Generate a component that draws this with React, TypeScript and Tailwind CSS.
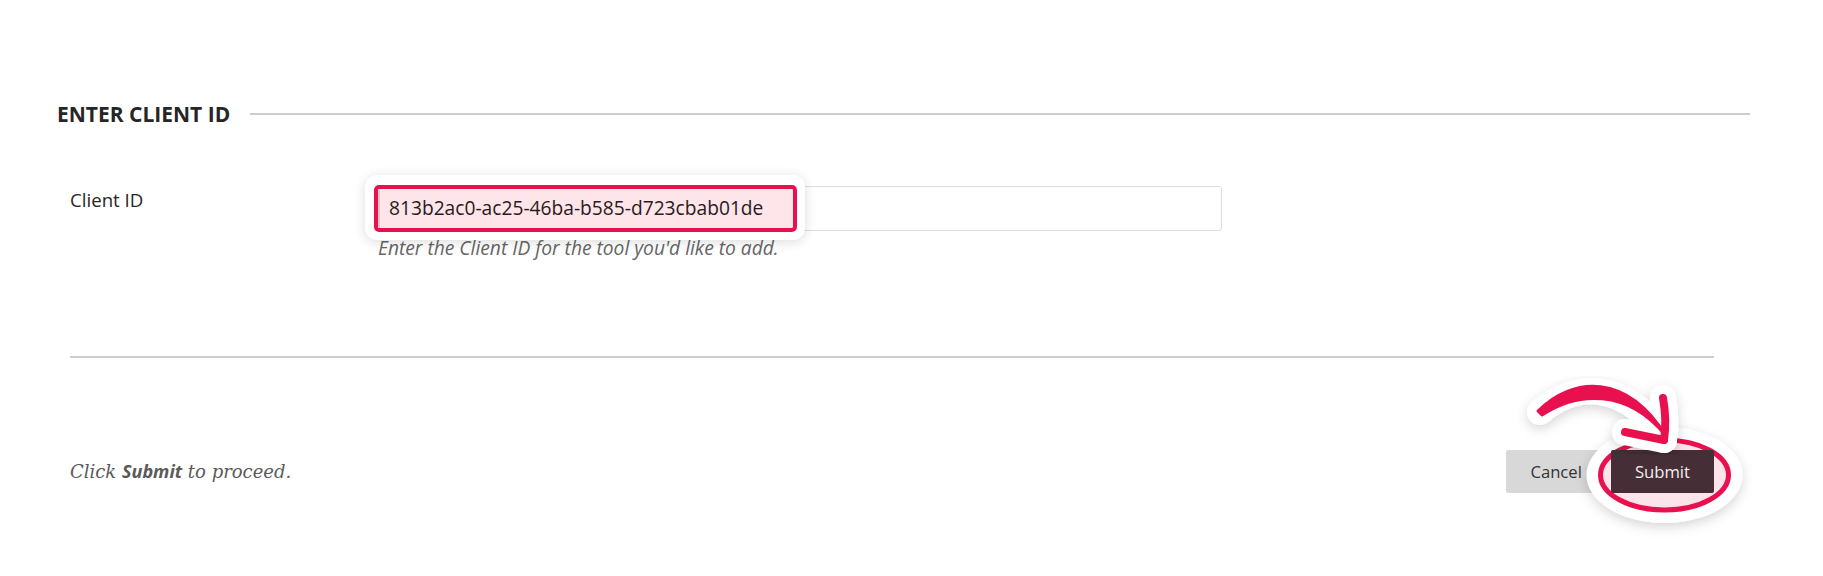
import React from 'react'

const clientId = '813b2ac0-ac25-46ba-b585-d723cbab01de'

function SubmitCallout() {
  // ellipse halo drawn under the Submit button
  return (
    <svg
      className="pointer-events-none absolute left-0 top-0 z-[5]"
      width={1823}
      height={576}
      aria-hidden="true"
    >
      <defs>
        <filter id="halo-shadow" x="-20%" y="-20%" width="140%" height="150%">
          <feDropShadow dx="0" dy="4" stdDeviation="6" floodColor="#000" floodOpacity="0.16" />
        </filter>
      </defs>
      <ellipse cx={1664.5} cy={475} rx={78} ry={48} fill="#fff" filter="url(#halo-shadow)" />
      <ellipse cx={1664.5} cy={475} rx={64} ry={35} fill="#fde4ea" stroke="#e8104f" strokeWidth={5} />
    </svg>
  )
}

function ArrowCallout() {
  const shaft = 'M1540 412 C1575 382 1625 380 1664 438'
  // tapered brush stroke: thin at both ends, thick in the middle
  const shaftBody =
    'M1538 411 C1573 376 1627 373 1666 436 C1627 388 1577 392 1542 415 Z'
  const barbA = 'M1663 398 Q1667 420 1664 440'
  const barbB = 'M1625 432 L1664 440'
  return (
    <svg
      className="pointer-events-none absolute left-0 top-0 z-20"
      width={1823}
      height={576}
      aria-hidden="true"
    >
      <defs>
        <filter id="arrow-shadow" x="-20%" y="-30%" width="140%" height="160%">
          <feDropShadow dx="0" dy="4" stdDeviation="6" floodColor="#000" floodOpacity="0.16" />
        </filter>
      </defs>
      <g filter="url(#arrow-shadow)" stroke="#fff" strokeWidth={26} strokeLinecap="round" strokeLinejoin="round" fill="none">
        <path d={shaft} />
        <path d={barbA} />
        <path d={barbB} />
      </g>
      <path d={shaftBody} fill="#e8104f" stroke="#e8104f" strokeWidth={3} strokeLinejoin="round" />
      <g stroke="#e8104f" strokeWidth={8} strokeLinecap="round" strokeLinejoin="round" fill="none">
        <path d={barbA} />
        <path d={barbB} />
      </g>
    </svg>
  )
}

export default function App() {
  return (
    <div className="relative h-[576px] w-[1823px] overflow-hidden bg-white font-['Open_Sans',sans-serif] text-[#262626]">
      <div className="pl-[57px] pr-[73px] pt-[99px]">
        <div className="flex h-[30px] items-center gap-[20px]">
          <h2 className="text-[21px] font-bold uppercase leading-[30px] text-[#262626]">
            Enter Client ID
          </h2>
          <div className="h-[2px] flex-1 bg-[#cdcdcd]" />
        </div>

        <div className="pl-[13px] pr-[36px]">
          <div className="mt-[57px] flex items-start">
            <label className="w-[308px] text-[18.67px] leading-[28px]">Client ID</label>
            <div>
              <div className="relative">
                <div className="h-[45px] w-[844px] rounded-[3px] border-[1.5px] border-[#dedede] bg-white" />
                <div className="absolute left-[-13px] top-[-11px] h-[65px] w-[440px] rounded-[12px] bg-white pl-[9px] pt-[10px] shadow-[0_2px_12px_rgba(0,0,0,0.14)]">
                  <div className="flex h-[47px] w-[423px] items-center rounded-[5px] border-4 border-[#e8104f] bg-[#fde5ea]">
                    <div className="flex h-full items-center border-l-[2px] border-[#d8c9cd] pl-[9px] text-[19.2px] text-[#2a1a20]">
                      {clientId}
                    </div>
                  </div>
                </div>
              </div>
              <p className="mt-[3px] text-[19.2px] italic leading-[28px] text-[#666]">
                Enter the Client ID for the tool you'd like to add.
              </p>
            </div>
          </div>

          <div className="mt-[94px] h-[2px] bg-[#cdcdcd]" />

          <div className="mt-[92px] flex items-center justify-between">
            <p className="font-['DejaVu_Serif',serif] text-[18px] italic leading-[28px] text-[#5a5a5a]">
              Click <strong className="font-['Open_Sans',sans-serif] font-bold">Submit</strong> to proceed.
            </p>
            <div className="flex items-center gap-[5px]">
              <button
                type="button"
                className="h-[43px] rounded-[2px] bg-[#d8d8d8] px-[24px] text-[16.67px] text-[#333]"
              >
                Cancel
              </button>
              <button
                type="button"
                className="relative z-10 h-[43px] rounded-[2px] bg-[#452e35] px-[24px] text-[16.67px] text-[#f6edf1]"
              >
                Submit
              </button>
            </div>
          </div>
        </div>
      </div>

      <SubmitCallout />
      <ArrowCallout />
    </div>
  )
}
